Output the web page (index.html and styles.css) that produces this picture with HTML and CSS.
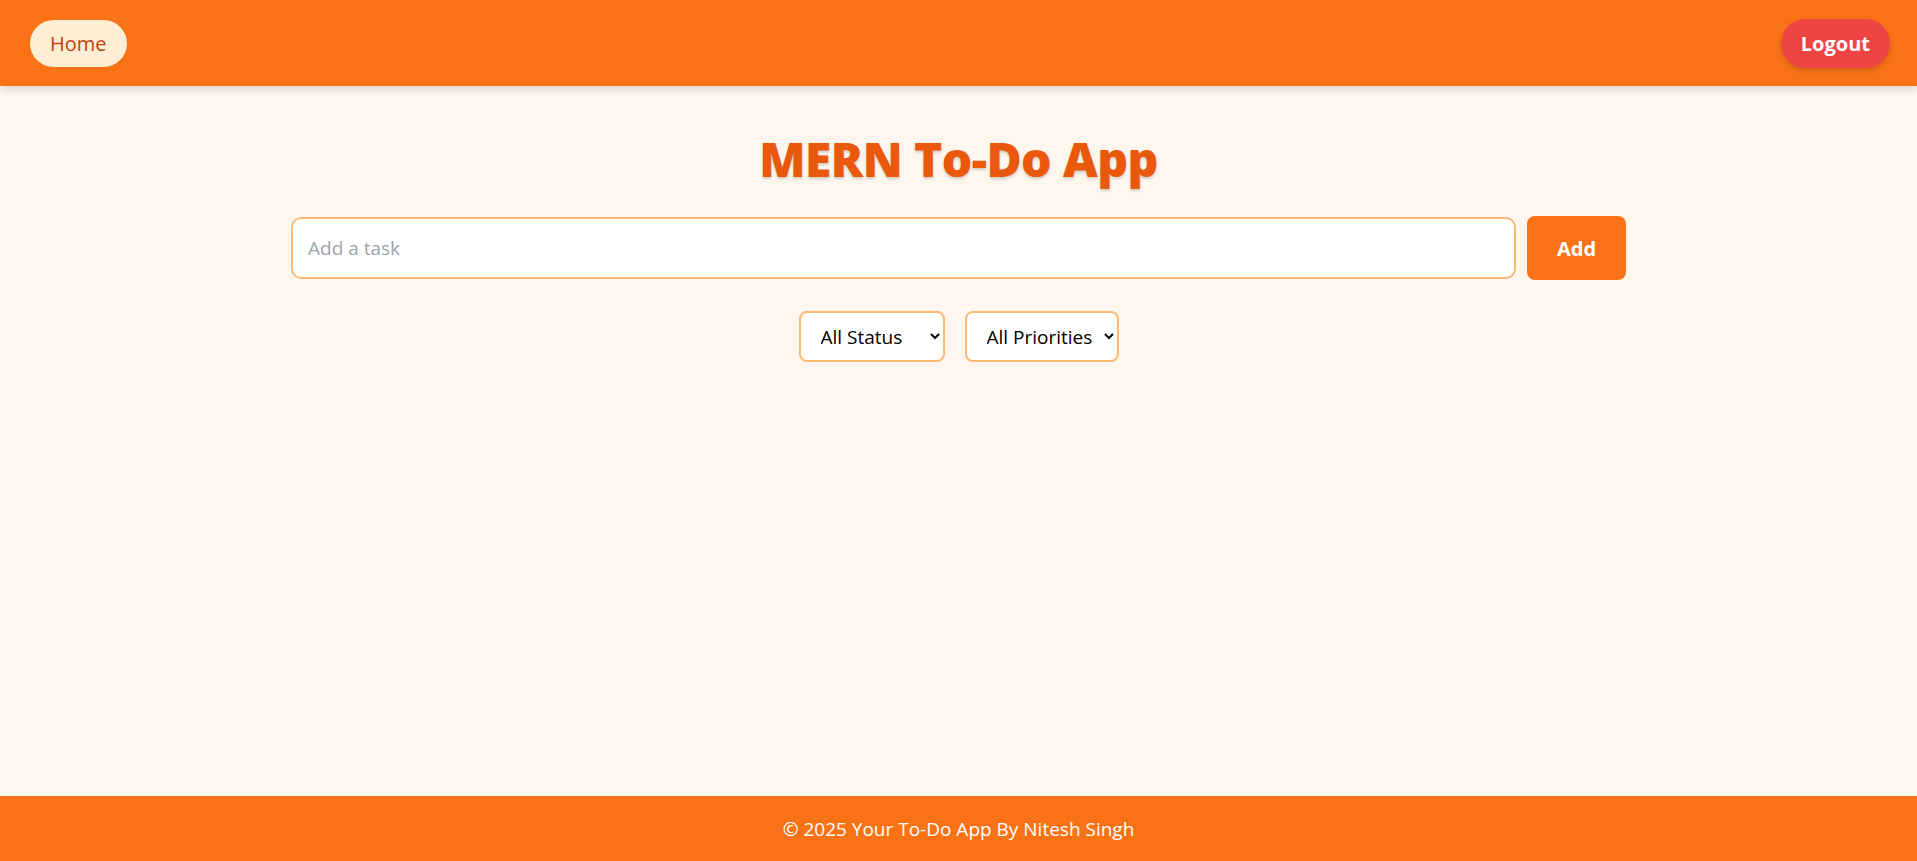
FILE: index.html
```html
<!DOCTYPE html>
<html lang="en">
<head>
<meta charset="utf-8">
<title>MERN To-Do App</title>
<link rel="stylesheet" href="styles.css">
</head>
<body>
<div class="page">
  <header class="topbar">
    <a class="home-btn" href="#">Home</a>
    <button class="logout-btn" type="button">Logout</button>
  </header>
  <main class="main">
    <h1 class="title">MERN To-Do App</h1>
    <form class="add-form">
      <input class="task-input" type="text" placeholder="Add a task">
      <button class="add-btn" type="button">Add</button>
    </form>
    <div class="filters">
      <select class="filter">
        <option>All Status</option>
        <option>Completed</option>
        <option>Pending</option>
      </select>
      <select class="filter">
        <option>All Priorities</option>
        <option>High</option>
        <option>Medium</option>
        <option>Low</option>
      </select>
    </div>
  </main>
  <footer class="footer">© 2025 Your To-Do App By Nitesh Singh</footer>
</div>
</body>
</html>
```

FILE: styles.css
```css
* { box-sizing: border-box; }
html, body { margin: 0; padding: 0; }
body {
  font-family: "Open Sans", "Noto Sans", sans-serif;
  background: #fff7ed;
  color: #000;
}
.page {
  min-height: 100vh;
  display: flex;
  flex-direction: column;
}
.topbar {
  height: 86px;
  background: #f97316;
  display: flex;
  align-items: center;
  justify-content: space-between;
  padding: 0 27px 0 30px;
  box-shadow: 0 4px 8px rgba(0,0,0,0.12);
  position: relative;
  z-index: 1;
}
.home-btn {
  display: inline-flex;
  align-items: center;
  height: 47px;
  padding: 0 20px;
  border-radius: 999px;
  background: #ffedd5;
  color: #c2410c;
  font-size: 20px;
  font-weight: 500;
  text-decoration: none;
  margin-top: 1px;
}
.logout-btn {
  height: 49px;
  padding: 0 20px;
  border: none;
  border-radius: 999px;
  background: #ef4444;
  color: #fff;
  font-family: inherit;
  font-size: 20px;
  font-weight: 700;
  box-shadow: 0 3px 6px rgba(0,0,0,0.15);
}
.main {
  flex: 1;
  display: flex;
  flex-direction: column;
  align-items: center;
}
.title {
  margin: 45px 0 0;
  font-size: 48px;
  line-height: 56px;
  font-weight: 800;
  color: #ea580c;
  text-shadow: 0 2px 3px rgba(0,0,0,0.18);
  letter-spacing: -0.6px;
}
.add-form {
  width: 1335px;
  margin-top: 29px;
  display: flex;
  gap: 11px;
}
.task-input {
  flex: 1;
  height: 62px;
  margin-top: 1px;
  border: 2px solid #fdba74;
  border-radius: 10px;
  background: #fff;
  padding: 0 15px;
  font-family: inherit;
  font-size: 19px;
  outline: none;
}
.task-input::placeholder { color: #9ca3af; }
.add-btn {
  width: 99px;
  height: 64px;
  border: none;
  border-radius: 8px;
  background: #f97316;
  color: #fff;
  font-family: inherit;
  font-size: 20px;
  font-weight: 700;
}
.filters {
  margin-top: 31px;
  display: flex;
  gap: 20px;
}
.filter {
  height: 51px;
  border: 2px solid #fdba74;
  border-radius: 8px;
  background: #fff;
  padding: 0 8px 0 16px;
  font-family: inherit;
  font-size: 19px;
  color: #000;
}
.footer {
  height: 65px;
  background: #f97316;
  color: #fff;
  display: flex;
  align-items: center;
  justify-content: center;
  font-size: 19px;
}
```
